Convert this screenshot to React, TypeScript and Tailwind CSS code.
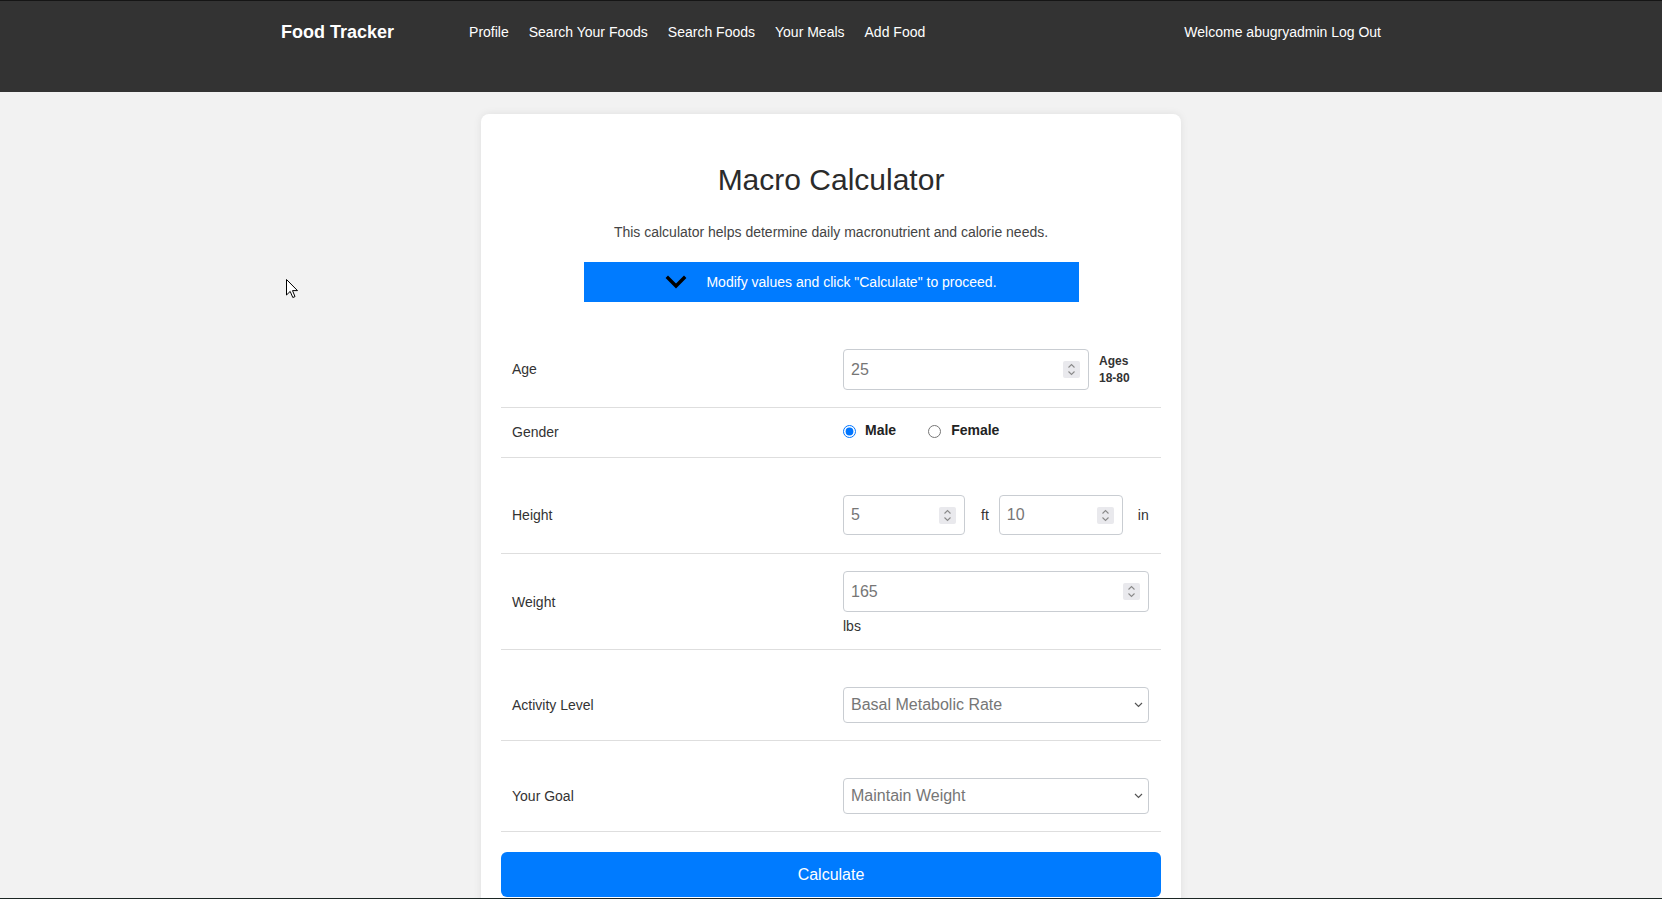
import React from "react";

function Spinner() {
  return (
    <div className="flex h-[17px] w-[17px] shrink-0 items-center justify-center rounded-[2px] bg-[#e9e9ed]">
      <svg width="9" height="13" viewBox="0 0 9 13" fill="none" stroke="#8a8a8a" strokeWidth="1.1">
        <polyline points="1.5,4.5 4.5,1.5 7.5,4.5" />
        <polyline points="1.5,8.5 4.5,11.5 7.5,8.5" />
      </svg>
    </div>
  );
}

function NumBox({ value, className }: { value: string; className: string }) {
  return (
    <div
      className={
        "flex items-center justify-between rounded-[4px] border border-[#c9cdd2] bg-white pl-[7px] pr-[8px] text-[16px] text-[#767676] " +
        className
      }
    >
      <span>{value}</span>
      <Spinner />
    </div>
  );
}

function SelectBox({ value }: { value: string }) {
  return (
    <div className="flex h-[36px] w-full items-center justify-between rounded-[4px] border border-[#c9cdd2] bg-white pl-[7px] pr-[5px] text-[16px] text-[#767676]">
      <span>{value}</span>
      <svg width="9" height="6" viewBox="0 0 9 6" fill="none" stroke="#555" strokeWidth="1.2">
        <polyline points="1,1 4.5,4.5 8,1" />
      </svg>
    </div>
  );
}

export default function App() {
  const font = { fontFamily: '"Liberation Sans", Arial, Helvetica, sans-serif' };
  return (
    <div className="relative min-h-screen bg-[#f2f2f2]" style={font}>
      <nav className="h-[92px] border-t border-[#151515] bg-[#333333]">
        <div className="mx-auto flex h-[63px] w-[1100px] items-center text-[14px] text-white">
          <span className="text-[18px] font-bold">Food Tracker</span>
          <div className="ml-[75px] flex items-center gap-[20px]">
            <span>Profile</span>
            <span>Search Your Foods</span>
            <span>Search Foods</span>
            <span>Your Meals</span>
            <span>Add Food</span>
          </div>
          <div className="ml-auto">
            <span>Welcome abugryadmin</span> <span>Log Out</span>
          </div>
        </div>
      </nav>

      <main className="pt-[22px]">
        <div className="mx-auto w-[700px] rounded-lg bg-white px-5 pb-6 pt-[48px] shadow-[0_0_8px_rgba(0,0,0,0.08)]">
          <h1 className="text-center text-[30px] leading-[36px] text-[#2b2b2b]">Macro Calculator</h1>
          <p className="mt-[24px] text-center text-[14px] leading-[21px] text-[#444]">
            This calculator helps determine daily macronutrient and calorie needs.
          </p>
          <div className="mx-auto mt-[19px] flex h-[40px] w-[495px] items-center justify-center gap-[19px] bg-[#007bff] text-[14px] text-white">
            <svg width="22" height="14" viewBox="0 0 22 14" fill="none" stroke="#000" strokeWidth="3.4" strokeLinecap="square">
              <polyline points="3,3 11,11 19,3" />
            </svg>
            <span>Modify values and click "Calculate" to proceed.</span>
          </div>

          <div className="mt-[30px] text-[14px] text-[#333]">
            {/* Age */}
            <div className="flex items-center border-b border-[#dedede] py-[17px]">
              <div className="w-1/2 pl-[11px]">Age</div>
              <div className="flex w-1/2 items-center px-3">
                <NumBox value="25" className="h-[41px] w-[246px]" />
                <div className="ml-[10px] text-[12px] font-semibold leading-[17px] text-[#333]">
                  <div>Ages</div>
                  <div>18-80</div>
                </div>
              </div>
            </div>

            {/* Gender */}
            <div className="flex h-[50px] items-center border-b border-[#dedede] leading-[21px]">
              <div className="w-1/2 pl-[11px]">Gender</div>
              <div className="flex w-1/2 items-center px-3 pb-[4px]">
                <label className="flex items-center gap-[9px]">
                  <input type="radio" name="gender" defaultChecked className="m-0 mt-[2px] h-[13px] w-[13px] accent-[#0075ff]" />
                  <span className="font-bold text-[#222]">Male</span>
                </label>
                <label className="ml-[32px] flex items-center gap-[10px]">
                  <input type="radio" name="gender" className="m-0 mt-[2px] h-[13px] w-[13px]" />
                  <span className="font-bold text-[#222]">Female</span>
                </label>
              </div>
            </div>

            {/* Height */}
            <div className="flex items-center border-b border-[#dedede] pb-[18px] pt-[37px]">
              <div className="w-1/2 pl-[11px]">Height</div>
              <div className="flex w-1/2 items-center px-3">
                <NumBox value="5" className="h-[40px] w-[122px]" />
                <span className="ml-[16px]">ft</span>
                <NumBox value="10" className="ml-[10px] h-[40px] w-[124px]" />
                <span className="ml-[15px]">in</span>
              </div>
            </div>

            {/* Weight */}
            <div className="flex items-center border-b border-[#dedede] pb-[12px] pt-[17px]">
              <div className="w-1/2 pb-[4px] pl-[11px]">Weight</div>
              <div className="w-1/2 px-3">
                <NumBox value="165" className="h-[41px] w-full" />
                <div className="mt-1 leading-[21px]">lbs</div>
              </div>
            </div>

            {/* Activity */}
            <div className="flex items-center border-b border-[#dedede] pb-[17px] pt-[37px]">
              <div className="w-1/2 pl-[11px]">Activity Level</div>
              <div className="w-1/2 px-3">
                <SelectBox value="Basal Metabolic Rate" />
              </div>
            </div>

            {/* Goal */}
            <div className="flex items-center border-b border-[#dedede] pb-[17px] pt-[37px]">
              <div className="w-1/2 pl-[11px]">Your Goal</div>
              <div className="w-1/2 px-3">
                <SelectBox value="Maintain Weight" />
              </div>
            </div>

            <button className="mt-[20px] flex h-[45px] w-full items-center justify-center rounded-md bg-[#007bff] text-[16px] text-white">
              Calculate
            </button>
          </div>
        </div>
      </main>

      {/* mouse cursor */}
      <svg className="absolute left-[286px] top-[279px]" width="13" height="20" viewBox="0 0 13 20">
        <path d="M0.5 0.5 L0.5 16 L4.2 12.4 L6.8 18.5 L9 17.6 L6.5 11.6 L11.5 11.6 Z" fill="#fff" stroke="#000" strokeWidth="1" />
      </svg>

      <div className="fixed bottom-0 left-0 right-0 h-px bg-[#1c2624]" />
    </div>
  );
}
